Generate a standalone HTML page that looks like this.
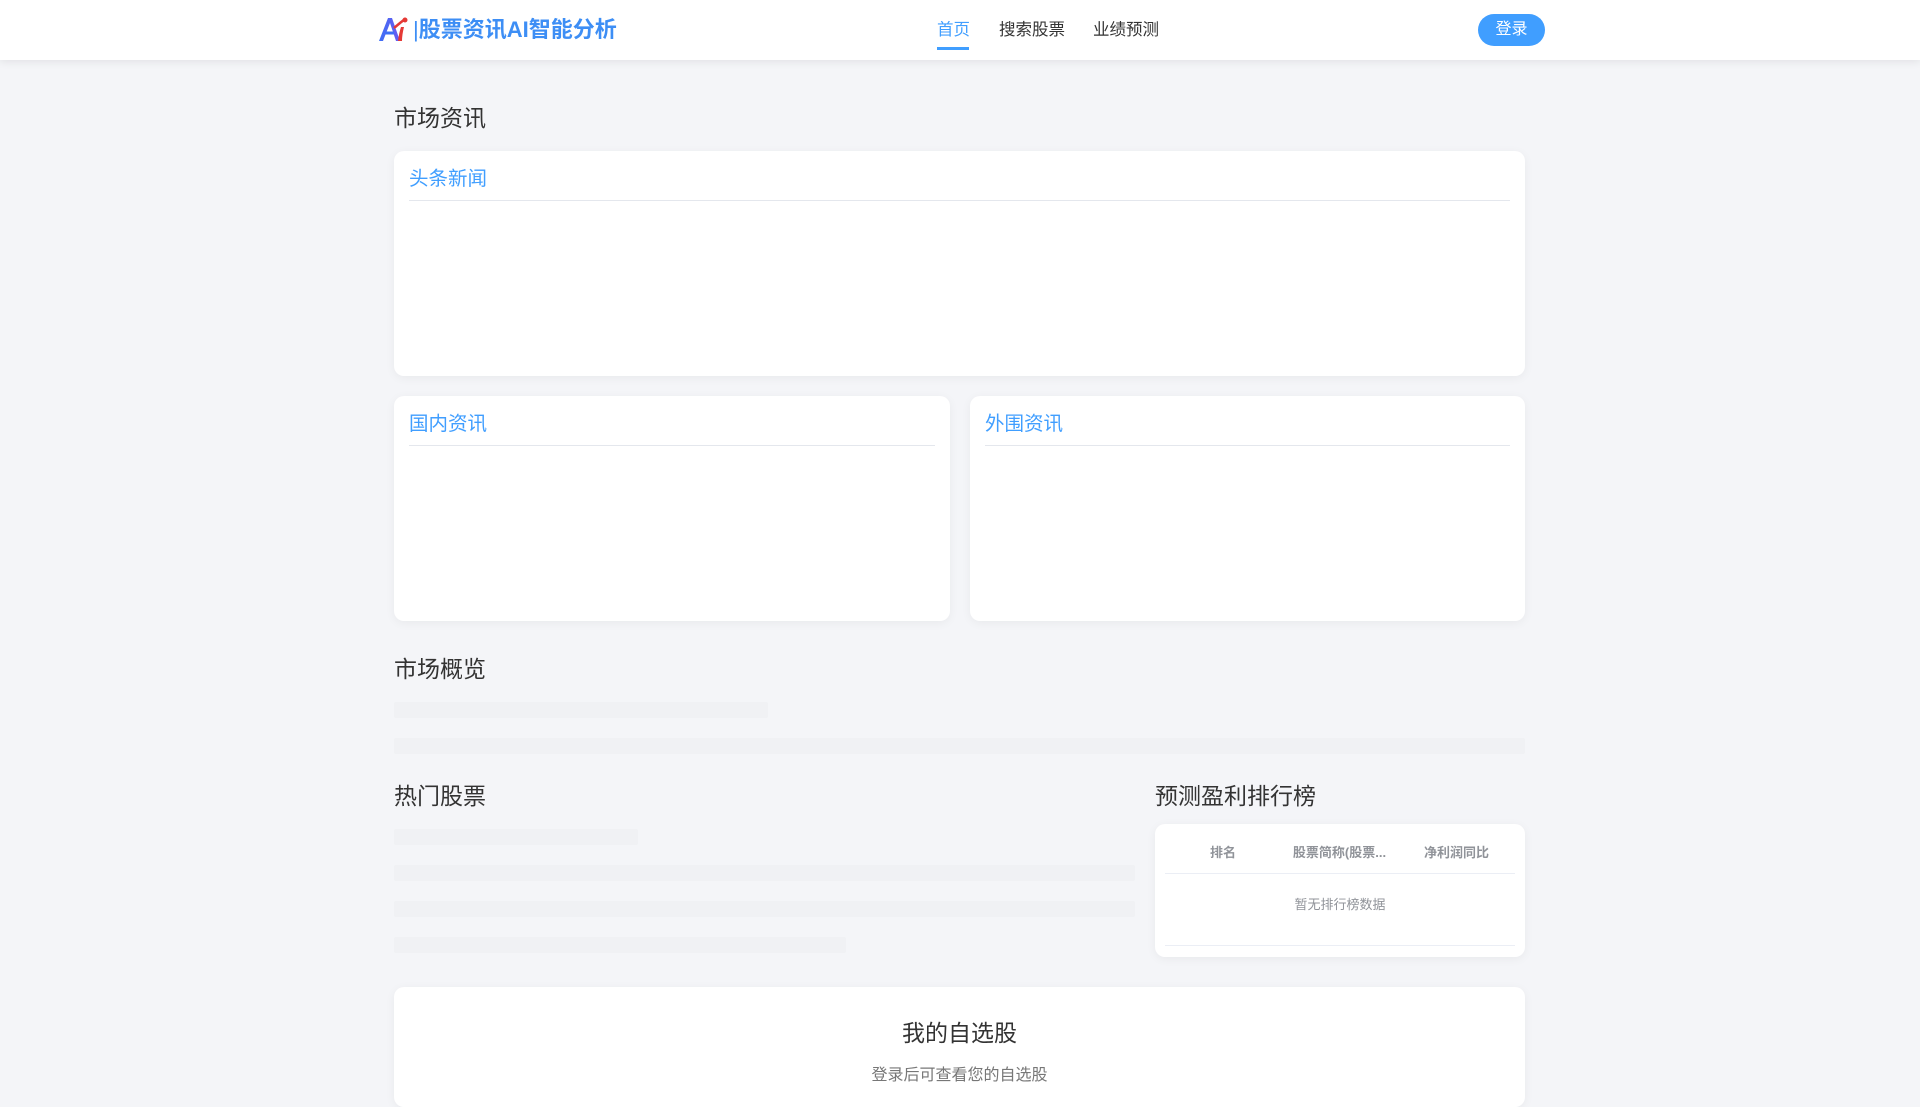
<!DOCTYPE html>
<html><head><meta charset="utf-8"><style>
*{margin:0;padding:0;box-sizing:border-box}
body{width:1920px;height:1080px;overflow:hidden;background:#f4f5f8;font-family:"Liberation Sans","Noto Sans CJK SC",sans-serif;position:relative;color:#333}
.hdr{position:absolute;left:0;top:0;width:1920px;height:60px;background:#fff;box-shadow:0 2px 8px rgba(0,0,0,.08)}
.abs{position:absolute}
.logo{left:413px;top:14px;font-size:22px;font-weight:bold;color:#3d8ef5;line-height:32px;white-space:nowrap}
.nav{top:18px;font-size:16.5px;line-height:24px;color:#333}
.btn{left:1478px;top:14px;width:67px;height:32px;border-radius:16px;background:#409eff;color:#fff;font-size:16px;line-height:32px;text-align:center}
h2{position:absolute;font-size:23px;font-weight:normal;color:#333;line-height:30px}
.card{position:absolute;background:#fff;border-radius:10px;box-shadow:0 2px 10px rgba(0,0,0,.05)}
.ct{position:absolute;left:15px;right:15px;top:13px;height:37px;border-bottom:1px solid #e4e7ed;color:#409eff;font-size:19.5px;line-height:30px}
.sk{position:absolute;background:#f0f1f4;height:16px;border-radius:2px}
</style></head><body>
<div class="hdr">
<svg class="abs" style="left:377px;top:15px" width="32" height="28" viewBox="0 0 32 28">
<defs><linearGradient id="g" x1="0" x2="1"><stop offset="0" stop-color="#3d6ef5"/><stop offset="1" stop-color="#6a5af0"/></linearGradient></defs>
<path d="M2 26 L11 3 L15 3 L23 26 L19 26 L13 8 L6 26 Z" fill="url(#g)"/>
<path d="M8 18 L17 18" stroke="#3d6ef5" stroke-width="3"/>
<path d="M21 26 Q22 18 24 12 L27 12 Q25 20 25 26 Z" fill="#e53935"/>
<path d="M17 13 L23 8 L28 4" stroke="#e53935" stroke-width="2.5" fill="none"/>
<circle cx="28" cy="5" r="2.5" fill="#e53935"/>
</svg>
<div class="abs logo"><span style="font-weight:normal">|</span>股票资讯AI智能分析</div>
<div class="abs nav" style="left:937px;color:#409eff">首页</div>
<div class="abs" style="left:937px;top:47px;width:32px;height:3px;background:#409eff"></div>
<div class="abs nav" style="left:999px">搜索股票</div>
<div class="abs nav" style="left:1093px">业绩预测</div>
<div class="abs btn">登录</div>
</div>

<h2 style="left:394px;top:103px">市场资讯</h2>
<div class="card" style="left:394px;top:151px;width:1131px;height:225px"><div class="ct">头条新闻</div></div>
<div class="card" style="left:394px;top:396px;width:556px;height:225px"><div class="ct">国内资讯</div></div>
<div class="card" style="left:970px;top:396px;width:555px;height:225px"><div class="ct">外围资讯</div></div>

<h2 style="left:394px;top:654px">市场概览</h2>
<div class="sk" style="left:394px;top:702px;width:374px"></div>
<div class="sk" style="left:394px;top:738px;width:1131px"></div>

<h2 style="left:394px;top:781px">热门股票</h2>
<div class="sk" style="left:394px;top:829px;width:244px"></div>
<div class="sk" style="left:394px;top:865px;width:741px"></div>
<div class="sk" style="left:394px;top:901px;width:741px"></div>
<div class="sk" style="left:394px;top:937px;width:452px"></div>

<h2 style="left:1155px;top:781px">预测盈利排行榜</h2>
<div class="card" style="left:1155px;top:824px;width:370px;height:133px">
<div class="abs" style="left:10px;right:10px;top:0;height:50px;border-bottom:1px solid #ebeef5;font-size:13px;font-weight:bold;color:#909399;line-height:58px">
<span class="abs" style="left:0;width:116px;text-align:center">排名</span>
<span class="abs" style="left:116px;width:117px;text-align:center">股票简称(股票...</span>
<span class="abs" style="left:233px;width:117px;text-align:center">净利润同比</span>
</div>
<div class="abs" style="left:0;right:0;top:70px;text-align:center;font-size:13px;color:#909399">暂无排行榜数据</div>
<div class="abs" style="left:10px;right:10px;top:121px;border-top:1px solid #ebeef5"></div>
</div>

<div class="card" style="left:394px;top:987px;width:1131px;height:120px">
<div class="abs" style="left:0;right:0;top:27px;text-align:center;font-size:23px;color:#333">我的自选股</div>
<div class="abs" style="left:0;right:0;top:74px;text-align:center;font-size:16px;color:#777">登录后可查看您的自选股</div>
</div>
</body></html>
